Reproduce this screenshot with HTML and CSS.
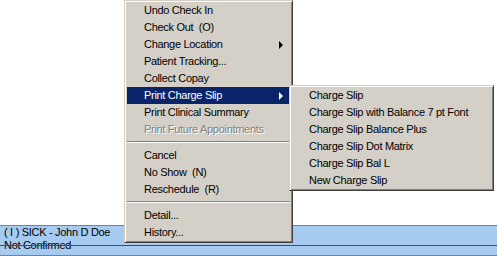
FILE: index.html
```html
<!DOCTYPE html>
<html lang="en">
<head>
  <meta charset="UTF-8" />
  <title>Appointment Menu</title>
  <link rel="stylesheet" href="styles.css">
</head>
<body>
  <div class="schedule">
    <div class="slot">
      <div class="slot-line">( I ) SICK - John D Doe</div>
      <div class="slot-line">Not Confirmed</div>
      <div class="now-line"></div>
    </div>
  </div>

  <ul class="menu main-menu">
    <li>Undo Check In</li>
    <li>Check Out&nbsp; (O)</li>
    <li class="has-sub">Change Location</li>
    <li>Patient Tracking...</li>
    <li>Collect Copay</li>
    <li class="has-sub active">Print Charge Slip</li>
    <li>Print Clinical Summary</li>
    <li class="disabled">Print Future Appointments</li>
    <li class="sep"></li>
    <li>Cancel</li>
    <li>No Show&nbsp; (N)</li>
    <li>Reschedule&nbsp; (R)</li>
    <li class="sep"></li>
    <li>Detail...</li>
    <li>History...</li>
  </ul>

  <ul class="menu sub-menu">
    <li>Charge Slip</li>
    <li>Charge Slip with Balance 7 pt Font</li>
    <li>Charge Slip Balance Plus</li>
    <li>Charge Slip Dot Matrix</li>
    <li>Charge Slip Bal L</li>
    <li>New Charge Slip</li>
  </ul>
</body>
</html>
```

FILE: styles.css
```css
body { margin:0; background:#fff; font-family:"Liberation Sans", Arial, sans-serif; font-size:11px; letter-spacing:-0.3px; color:#000; width:497px; height:256px; overflow:hidden; position:relative; }

/* schedule strip behind the menus */
.schedule { padding-top:225px; }
.slot { position:relative; background:#a6caf0; border-top:1px solid #808080; border-bottom:1px solid #808080; height:29px; overflow:hidden; padding-left:4px; }
.slot-line { line-height:13px; white-space:nowrap; }
.now-line { position:absolute; left:0; right:0; top:19px; height:1px; background:#7f3f00; }

/* classic popup menus */
.menu { position:absolute; margin:0; padding:1px; list-style:none; background:#d4d0c8;
  border:1px solid; border-color:#d4d0c8 #404040 #404040 #d4d0c8;
  box-shadow:inset 1px 1px #fff, inset -1px -1px #808080; }
.main-menu { left:124px; top:0; width:165px; }
.sub-menu { left:289px; top:85px; width:201px; }
.menu li { position:relative; height:17px; line-height:17px; padding-left:17px; margin:0 1px; white-space:nowrap; }
.menu li.active { background:#0a246a; color:#fff; }
.menu li.disabled { color:#808080; text-shadow:1px 1px 0 #fff; }
.menu li.sep { height:9px; }
.menu li.sep::before { content:""; position:absolute; left:0; right:0; top:3px; height:1px; background:#808080; border-bottom:1px solid #fff; }
.menu li.has-sub::after { content:""; position:absolute; right:7px; top:5px; border-left:4px solid #000; border-top:4px solid transparent; border-bottom:4px solid transparent; }
.menu li.has-sub.active::after { border-left-color:#fff; }
```
